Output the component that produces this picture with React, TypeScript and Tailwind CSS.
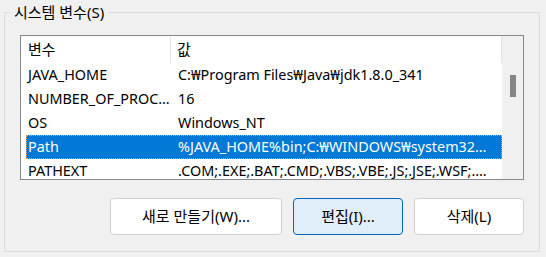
const rows = [
  { name: "JAVA_HOME", value: "C:₩Program Files₩Java₩jdk1.8.0_341" },
  { name: "NUMBER_OF_PROC…", value: "16" },
  { name: "OS", value: "Windows_NT" },
  { name: "Path", value: "%JAVA_HOME%bin;C:₩WINDOWS₩system32…", selected: true },
  { name: "PATHEXT", value: ".COM;.EXE;.BAT;.CMD;.VBS;.VBE;.JS;.JSE;.WSF;…." },
];

const font = { fontFamily: '"Segoe UI", "Noto Sans", "Noto Sans CJK KR", sans-serif' };

export default function App() {
  return (
    <div
      className="w-[546px] h-[257px] bg-[#f0f0f0] pt-[12px] px-[4px] text-[15px] text-black"
      style={font}
    >
      <div className="relative w-[536px] h-[240px] border border-[#dcdcdc] pl-[15px] pt-[22px]">
        <div className="absolute left-[5px] top-[-11px] bg-[#f0f0f0] px-[4px] leading-[20px] text-[15px]">
          시스템 변수(S)
        </div>

        <div className="flex w-[504px] h-[145px] border border-[#828790] bg-white overflow-hidden">
          <div className="flex-1 flex flex-col">
            <div className="flex h-[27px] items-center shrink-0">
              <div className="w-[150px] pl-[7px] border-r border-[#e5e5e5] h-full flex items-center">변수</div>
              <div className="flex-1 pl-[6px] border-r border-[#e5e5e5] h-full flex items-center">값</div>
            </div>
            <div className="pl-[5px] text-[14.4px]">
              {rows.map((r) => (
                <div
                  key={r.name}
                  className={
                    r.selected
                      ? "flex h-[24px] items-center bg-[#0078d7] text-white outline-1 outline-dotted outline-[#f0a040] -outline-offset-1"
                      : "flex h-[24px] items-center"
                  }
                >
                  <div className="w-[152px] pl-[2px] whitespace-nowrap overflow-hidden">{r.name}</div>
                  <div className="flex-1 whitespace-nowrap overflow-hidden">{r.value}</div>
                </div>
              ))}
            </div>
          </div>
          <div className="w-[21px] bg-[#f0f0f0] shrink-0 pt-[39px] flex justify-center">
            <div className="w-[6px] h-[22px] bg-[#858585]" />
          </div>
        </div>

        <div className="flex justify-end gap-[11px] mt-[18px] w-[504px]">
          <button className="w-[172px] h-[37px] bg-white border border-[#d0d0d0] rounded-[4px]">
            새로 만들기(W)...
          </button>
          <button className="w-[110px] h-[37px] bg-[#e0eef9] border border-[#0067c0] rounded-[4px]">
            편집(I)...
          </button>
          <button className="w-[110px] h-[37px] bg-white border border-[#d0d0d0] rounded-[4px]">
            삭제(L)
          </button>
        </div>
      </div>
    </div>
  );
}
